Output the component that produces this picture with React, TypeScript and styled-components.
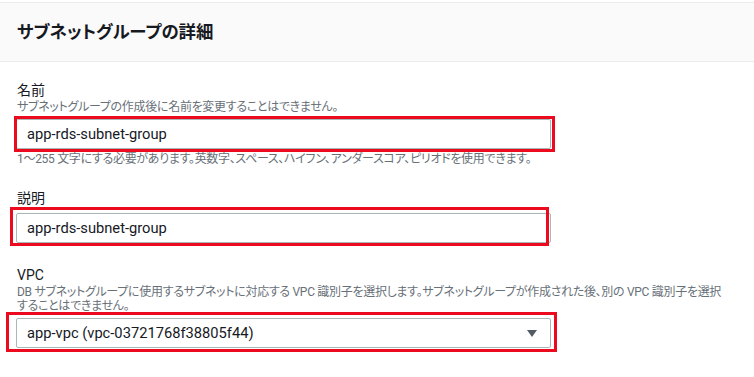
import React from "react";
import styled, { createGlobalStyle } from "styled-components";

const GlobalStyle = createGlobalStyle`
    html, body {
        margin: 0;
        padding: 0;
        background: #ffffff;
    }
    body {
        font-family: Roboto, "Noto Sans CJK JP", sans-serif;
        font-feature-settings: "palt";
        color: #16191f;
    }
`;

interface HighlightProps {
    top: number;
    right: number;
    bottom: number;
    left: number;
}

const fields = {
    name: { top: 3, right: 4, bottom: 3, left: 2 },
    desc: { top: 6, right: -2, bottom: 3, left: 6 },
    vpc: { top: 6, right: 6, bottom: 4, left: 10 },
};

const App = () => {
    return (
        <>
            <GlobalStyle />
            <Panel>
                <Header>
                    <Title>サブネットグループの詳細</Title>
                </Header>
                <Body>
                    <Field>
                        <Label>名前</Label>
                        <Description>サブネットグループの作成後に名前を変更することはできません。</Description>
                        <Control>
                            <TextInput defaultValue="app-rds-subnet-group" readOnly />
                            <Highlight {...fields.name} />
                        </Control>
                        <Hint>1〜255 文字にする必要があります。英数字、スペース、ハイフン、アンダースコア、ピリオドを使用できます。</Hint>
                    </Field>

                    <Field>
                        <Label>説明</Label>
                        <Control>
                            <TextInput defaultValue="app-rds-subnet-group" readOnly />
                            <Highlight {...fields.desc} />
                        </Control>
                    </Field>

                    <Field>
                        <Label>VPC</Label>
                        <Description>
                            DB サブネットグループに使用するサブネットに対応する VPC 識別子を選択します。サブネットグループが作成された後、別の VPC 識別子を選択することはできません。
                        </Description>
                        <Control>
                            <Select>
                                <span>app-vpc (vpc-03721768f38805f44)</span>
                                <Caret />
                            </Select>
                            <Highlight {...fields.vpc} />
                        </Control>
                    </Field>
                </Body>
            </Panel>
        </>
    );
};

const Panel = styled.div`
    padding-top: 2px;
    width: 754px;
    height: 377px;
    box-sizing: border-box;
    overflow: hidden;
`;

const Header = styled.div`
    height: 58px;
    background: #fafafa;
    border-top: 1px solid #eaeded;
    border-bottom: 1px solid #eaeded;
    display: flex;
    align-items: center;
    padding: 0 17px;
`;

const Title = styled.h2`
    margin: 0;
    font-size: 17.4px;
    font-weight: 700;
    line-height: 22px;
    color: #16191f;
`;

const Body = styled.div`
    padding: 18px 17px 0 16px;
    display: flex;
    flex-direction: column;
    gap: 22px;
`;

const Field = styled.div`
    display: flex;
    flex-direction: column;
`;

const Label = styled.div`
    font-size: 14px;
    line-height: 20px;
    padding-left: 1px;
`;

const Description = styled.div`
    font-size: 12px;
    line-height: 14px;
    letter-spacing: -0.3px;
    color: #687078;
    padding-left: 1px;
    max-width: 712px;
`;

const Hint = styled(Description)`
    margin-top: 3px;
`;

const Control = styled.div`
    position: relative;
    width: 535px;
    margin-top: 5px;
`;

const TextInput = styled.input`
    display: block;
    width: 100%;
    height: 30px;
    box-sizing: border-box;
    border: 1px solid #aab7b8;
    border-radius: 2px;
    padding: 0 10px;
    font-family: Roboto, "Noto Sans CJK JP", sans-serif;
    font-size: 14.7px;
    color: #16191f;
    background: #ffffff;
    outline: none;
`;

const Select = styled.div`
    display: flex;
    align-items: center;
    justify-content: space-between;
    height: 30px;
    box-sizing: border-box;
    border: 1px solid #aab7b8;
    border-radius: 2px;
    padding: 0 13px 0 10px;
    font-size: 14.7px;
    color: #16191f;
`;

const Caret = styled.span`
    width: 0;
    height: 0;
    border-left: 5px solid transparent;
    border-right: 5px solid transparent;
    border-top: 7px solid #545b64;
`;

// red annotation boxes drawn over the inputs
const Highlight = styled.div<HighlightProps>`
    position: absolute;
    top: ${(p) => -p.top}px;
    bottom: ${(p) => -p.bottom}px;
    left: ${(p) => -p.left}px;
    right: ${(p) => -p.right}px;
    border: 3px solid #eb0a1e;
    pointer-events: none;
`;

export default App;
